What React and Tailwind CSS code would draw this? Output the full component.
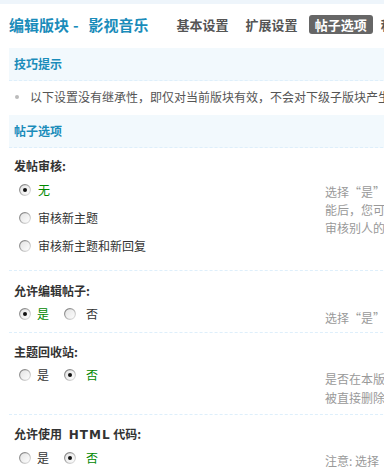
import React from 'react';

const tabs = [
  { name: '基本设置', cls: '' },
  { name: '扩展设置', cls: '' },
  { name: '帖子选项', active: true, cls: '' },
  { name: '积分设置', cls: 'ml-[-3px]' },
];

// Old-style gray radio, drawn so it looks like the browser one in the screenshot
const Radio = ({ checked }) => (
  <svg width="12" height="12" viewBox="0 0 12 12" className="shrink-0">
    <defs>
      <linearGradient id="radioStroke" x1="0" y1="0" x2="1" y2="1">
        <stop offset="0" stopColor="#6f6f6f" />
        <stop offset="0.55" stopColor="#b5b5b5" />
        <stop offset="1" stopColor="#ececec" />
      </linearGradient>
      <linearGradient id="radioFill" x1="0" y1="0" x2="1" y2="1">
        <stop offset="0" stopColor="#e2e2e2" />
        <stop offset="1" stopColor="#ffffff" />
      </linearGradient>
    </defs>
    <circle cx="6" cy="6" r="5.4" fill="url(#radioFill)" stroke="url(#radioStroke)" strokeWidth="1.1" />
    {checked && <circle cx="6" cy="6" r="2" fill="#111" />}
  </svg>
);

// full width quotes, like the old SimSun page
const Q = ({ children }) => <span className="[font-feature-settings:'fwid']">{children}</span>;

const Option = ({ text, checked, gap }) => (
  <label className="flex items-center h-[28px]">
    <Radio checked={checked} />
    <span className={`${gap} ${checked ? 'text-[#008800]' : 'text-[#333]'}`}>{text}</span>
  </label>
);

const Setting = ({ label, options, inline, desc, labelClass, descClass, leftClass, lineClass }) => (
  <div className="border-b border-dashed border-[#deeffb]">
    <div className={`${labelClass} pl-[5px] leading-[16px] font-bold text-[#333]`}>{label}</div>
    <div className="flex">
      <div className={`w-[316px] shrink-0 pl-[10px] ${leftClass}`}>
        {inline ? (
          <div className="flex items-center">
            {options.map((o, i) => (
              <div key={o.text} className={i > 0 ? 'ml-[15px]' : ''}>
                <Option text={o.text} checked={o.checked} gap={i === 0 ? 'ml-[6px]' : 'ml-[10px]'} />
              </div>
            ))}
          </div>
        ) : (
          options.map((o) => <Option key={o.text} text={o.text} checked={o.checked} gap="ml-[7px]" />)
        )}
      </div>
      <div className={`text-[#999] whitespace-nowrap ${descClass}`}>
        {desc.map((line, i) => (
          <div key={i} className={lineClass}>
            {line}
          </div>
        ))}
      </div>
    </div>
  </div>
);

export default function App() {
  return (
    <div className="w-[384px] h-[470px] overflow-hidden bg-white text-[12px] font-['Noto_Sans_CJK_SC',sans-serif]">
      <div className="h-[4px] bg-[#eef5fb]" />

      {/* Title + tabs */}
      <div className="h-[40px] flex items-center pl-[9px] whitespace-nowrap">
        <h1 className="shrink-0 flex items-center text-[15px] leading-none font-bold text-[#1a8cba]">
          <span>编辑版块</span>
          <span className="ml-[4px]">-</span>
          <span className="ml-[10px]">影视音乐</span>
        </h1>
        <div className="ml-[22px] flex items-center gap-[5px] shrink-0">
          {tabs.map((t) => (
            <span
              key={t.name}
              className={`h-[19px] px-[6px] flex items-center rounded-[3px] text-[13px] font-bold leading-none ${t.cls} ${
                t.active ? 'bg-[#666] text-white' : 'text-[#555]'
              }`}
            >
              {t.name}
            </span>
          ))}
        </div>
      </div>

      <div className="mt-[4px] ml-[9px] w-[700px]">
        {/* Tips */}
        <div className="h-[33px] bg-[#f2f9fd] border-b border-dashed border-[#deeffb] flex items-center pl-[5px] font-bold text-[#1a8cba]">
          技巧提示
        </div>
        <div className="h-[34px] flex items-center pb-[2px] text-[#555] whitespace-nowrap">
          <span className="ml-[6px] w-[4px] h-[4px] rounded-full bg-[#bbb]" />
          <span className="ml-[11px]">以下设置没有继承性，即仅对当前版块有效，不会对下级子版块产生影响。</span>
        </div>

        {/* Post options */}
        <div className="h-[33px] bg-[#f2f9fd] border-b border-dashed border-[#deeffb] flex items-center pl-[5px] font-bold text-[#1a8cba]">
          帖子选项
        </div>

        <Setting
          label="发帖审核:"
          labelClass="pt-[10px]"
          leftClass="pt-[2px] pb-[10px]"
          descClass="pt-[9px]"
          lineClass="leading-[18px]"
          options={[
            { text: '无', checked: true },
            { text: '审核新主题' },
            { text: '审核新主题和新回复' },
          ]}
          desc={[
            <>选择<Q>“</Q>是<Q>”</Q>将使用户在本版发表的帖子待经版主或管理员审查通过后才显示出来，打开此功</>,
            '能后，您可以在用户组中设定哪些组发帖可不经审核，也可以在管理组中设定哪些组可以',
            '审核别人的帖子',
          ]}
        />

        <Setting
          label="允许编辑帖子:"
          labelClass="pt-[12px]"
          leftClass="pt-[1px] pb-[4px]"
          descClass="pt-[10px]"
          lineClass="leading-[18px]"
          inline
          options={[{ text: '是', checked: true }, { text: '否' }]}
          desc={[<>选择<Q>“</Q>是<Q>”</Q>将允许用户编辑本版发表的帖子</>]}
        />

        <Setting
          label="主题回收站:"
          labelClass="pt-[11px]"
          leftClass="pt-[1px] pb-[4px]"
          descClass="pt-[9px] pb-[7px]"
          lineClass="leading-[19px]"
          inline
          options={[{ text: '是' }, { text: '否', checked: true }]}
          desc={[
            '是否在本版启用回收站功能，打开此功能后，所有被删除的主题将被移动到回收站中，而不是',
            '被直接删除',
          ]}
        />

        <Setting
          label={
            <>
              允许使用 <span className="ml-[4px] font-['DejaVu_Sans',sans-serif] tracking-[1px]">HTML</span> 代码:
            </>
          }
          labelClass="pt-[11px]"
          leftClass="pt-[1px] pb-[4px]"
          descClass="pt-[9px] pb-[7px]"
          lineClass="leading-[18px]"
          inline
          options={[{ text: '是' }, { text: '否', checked: true }]}
          desc={[<>注意: 选择<Q>“</Q>是<Q>”</Q>将不屏蔽帖子中的任何代码，将带来严重的安全隐患，请慎用</>]}
        />
      </div>
    </div>
  );
}
